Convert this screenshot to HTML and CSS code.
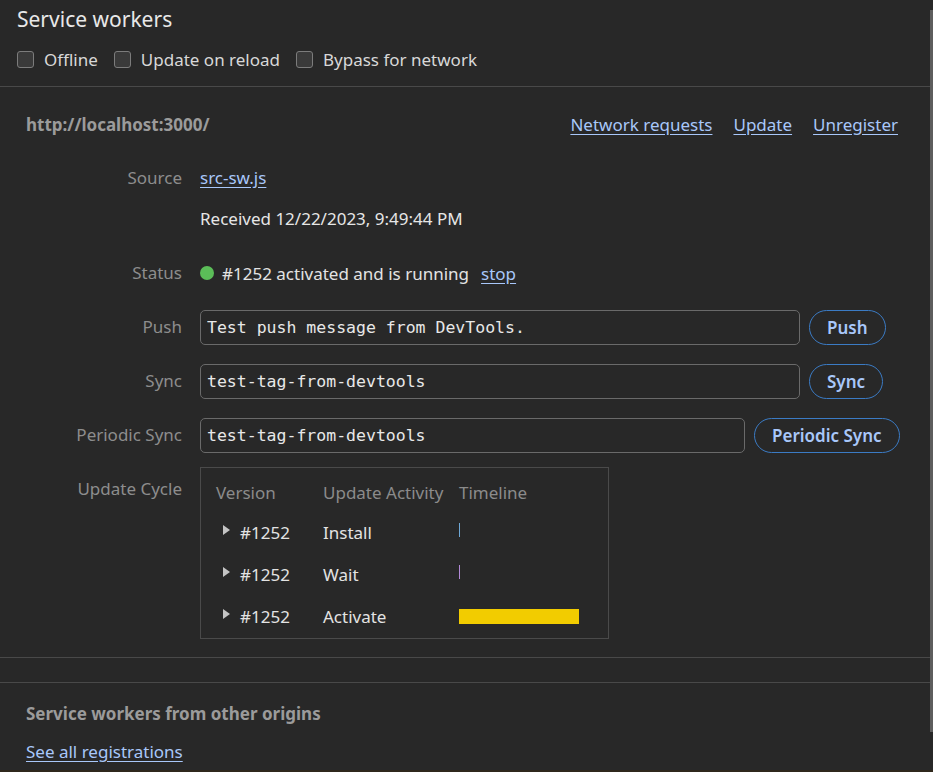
FILE: index.html
```html
<!DOCTYPE html>
<html lang="en">
<head>
<meta charset="utf-8">
<title>Service workers</title>
<link rel="stylesheet" href="styles.css">
</head>
<body>
<div class="page">
  <main class="content">
    <header class="toolbar">
      <h1 class="title">Service workers</h1>
      <div class="options">
        <label class="check"><input type="checkbox" class="box">Offline</label>
        <label class="check"><input type="checkbox" class="box">Update on reload</label>
        <label class="check"><input type="checkbox" class="box">Bypass for network</label>
      </div>
    </header>

    <section class="registration">
      <div class="reg-head">
        <div class="origin">http://localhost:3000/</div>
        <nav class="reg-links">
          <a href="#" class="link">Network requests</a>
          <a href="#" class="link">Update</a>
          <a href="#" class="link">Unregister</a>
        </nav>
      </div>

      <div class="fields">
        <div class="field">
          <div class="label">Source</div>
          <div class="value stack">
            <div class="line"><a href="#" class="link">src-sw.js</a></div>
            <div class="line received">Received 12/22/2023, 9:49:44 PM</div>
          </div>
        </div>

        <div class="field">
          <div class="label">Status</div>
          <div class="value status">
            <span class="dot"></span>
            <span>#1252 activated and is running</span>
            <a href="#" class="link stop">stop</a>
          </div>
        </div>

        <div class="field">
          <div class="label">Push</div>
          <div class="value form">
            <input class="text-input wide" type="text" value="Test push message from DevTools.">
            <button class="pill">Push</button>
          </div>
        </div>

        <div class="field">
          <div class="label">Sync</div>
          <div class="value form">
            <input class="text-input wide" type="text" value="test-tag-from-devtools">
            <button class="pill">Sync</button>
          </div>
        </div>

        <div class="field">
          <div class="label">Periodic Sync</div>
          <div class="value form">
            <input class="text-input narrow" type="text" value="test-tag-from-devtools">
            <button class="pill">Periodic Sync</button>
          </div>
        </div>

        <div class="field cycle">
          <div class="label cycle-label">Update Cycle</div>
          <div class="value">
            <div class="cycle-table">
              <div class="th">Version</div>
              <div class="th">Update Activity</div>
              <div class="th">Timeline</div>

              <div class="td version"><span class="tri"></span>#1252</div>
              <div class="td">Install</div>
              <div class="td"><span class="tick install"></span></div>

              <div class="td version"><span class="tri"></span>#1252</div>
              <div class="td">Wait</div>
              <div class="td"><span class="tick wait"></span></div>

              <div class="td version"><span class="tri"></span>#1252</div>
              <div class="td">Activate</div>
              <div class="td"><span class="bar" style="width:120px"></span></div>
            </div>
          </div>
        </div>
      </div>
    </section>

    <div class="gap-section"></div>

    <section class="other">
      <div class="other-title">Service workers from other origins</div>
      <a href="#" class="link all">See all registrations</a>
    </section>
  </main>
  <div class="scrollbar"><div class="thumb"></div></div>
</div>
<div class="bottom-strip"></div>
</body>
</html>
```

FILE: styles.css
```css
* { box-sizing: border-box; }

html, body {
  margin: 0;
  padding: 0;
  background: #282828;
}

body {
  font-family: "Noto Sans", "Open Sans", "DejaVu Sans", sans-serif;
  font-size: 17px;
  color: #e3e3e3;
  width: 933px;
  height: 772px;
  overflow: hidden;
}

.page {
  display: flex;
  height: 770px;
}

.content {
  width: 930px;
  flex: none;
}

.scrollbar {
  width: 3px;
  flex: none;
  padding-top: 10px;
}

.thumb {
  width: 3px;
  height: 722px;
  background: #5d5d5d;
}

.bottom-strip {
  height: 2px;
  background: #2f281c;
}

/* toolbar */
.toolbar {
  border-bottom: 1px solid #494949;
  padding: 4px 0 0 17px;
  height: 87px;
}

.title {
  margin: 0;
  font-size: 21px;
  font-weight: 400;
  line-height: 30px;
  color: #e8e8e8;
}

.options {
  display: flex;
  align-items: center;
  gap: 16px;
  margin-top: 10px;
  height: 30px;
}

.check {
  display: flex;
  align-items: center;
  gap: 10px;
  font-size: 17px;
  color: #d8d8d8;
}

.box {
  appearance: none;
  -webkit-appearance: none;
  margin: 0;
  width: 17px;
  height: 17px;
  border: 1px solid #7c7c7c;
  border-radius: 3px;
  background: #3a3a3a;
}

/* registration */
.registration {
  padding: 20px 32px 18px 26px;
  border-bottom: 1px solid #494949;
}

.reg-head {
  display: flex;
  justify-content: space-between;
  align-items: center;
  height: 34px;
}

.origin {
  font-weight: 700;
  color: #9b9b9b;
  font-size: 17px;
}

.reg-links {
  display: flex;
  gap: 21px;
  font-size: 17px;
}

.link {
  color: #a8c7fa;
  text-decoration: underline;
  text-underline-offset: 3px;
}

.fields {
  margin-top: 19px;
  display: flex;
  flex-direction: column;
  gap: 18px;
}

.field {
  display: grid;
  grid-template-columns: 156px 1fr;
  column-gap: 18px;
  align-items: center;
}

.field.cycle {
  align-items: start;
  margin-top: -4px;
}

.label {
  text-align: right;
  color: #8d8d8d;
  font-size: 17px;
  line-height: 36px;
  align-self: start;
}

.cycle-label {
  line-height: 44px;
}

.value {
  font-size: 17px;
  min-height: 36px;
  display: flex;
  align-items: center;
}

.stack {
  flex-direction: column;
  align-items: flex-start;
}

.line {
  line-height: 36px;
}

.received {
  margin-top: 5px;
  color: #e6e6e6;
}

.dot {
  width: 14px;
  height: 14px;
  border-radius: 50%;
  background: #5bbd58;
  margin-right: 8px;
}

.stop {
  margin-left: 12px;
}

.form {
  gap: 9px;
}

.text-input {
  flex: none;
  height: 35px;
  border: 1px solid #6a6a6a;
  border-radius: 5px;
  background: #282828;
  color: #e8e8e8;
  font-family: "DejaVu Sans Mono", "Liberation Mono", monospace;
  font-size: 16.5px;
  padding: 0 6px;
  outline: none;
}

.text-input.wide { width: 600px; }
.text-input.narrow { width: 545px; }

.pill {
  flex: none;
  white-space: nowrap;
  height: 35px;
  padding: 0 17px;
  border: 1px solid #3b7bc4;
  border-radius: 18px;
  background: #282828;
  color: #a8c7fa;
  font-family: inherit;
  font-size: 17px;
  font-weight: 600;
}

/* cycle table */
.cycle-table {
  width: 409px;
  border: 1px solid #4a4a4a;
  display: grid;
  grid-template-columns: 107px 136px 1fr;
  padding: 12px 0 1px 15px;
  grid-auto-rows: 42px;
  grid-template-rows: 31px;
}

.th {
  color: #8b8b8b;
  font-size: 17px;
  line-height: 26px;
}

.td {
  display: flex;
  align-items: center;
  font-size: 17px;
  color: #e3e3e3;
}

.version {
  padding-left: 7px;
}

.tri {
  width: 0;
  height: 0;
  border-top: 5px solid transparent;
  border-bottom: 5px solid transparent;
  border-left: 7px solid #c4c4c4;
  margin-right: 10px;
  margin-top: -4px;
}

.tick {
  width: 1px;
  height: 14px;
  margin-top: -4px;
}

.tick.install { background: #6fa8d6; }
.tick.wait { background: #b38ad8; }

.bar {
  height: 15px;
  background: #f2cc00;
}

.gap-section {
  height: 25px;
  border-bottom: 1px solid #494949;
}

.other {
  padding: 13px 0 0 26px;
  display: flex;
  flex-direction: column;
  align-items: flex-start;
}

.other-title {
  font-weight: 700;
  color: #9b9b9b;
  font-size: 17px;
  line-height: 36px;
}

.all {
  font-size: 17px;
  line-height: 36px;
  margin-top: 2px;
}
```
